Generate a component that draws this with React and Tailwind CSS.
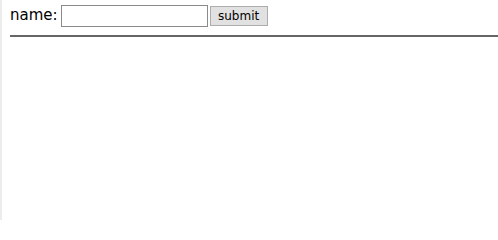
export default function App() {
  return (
    <div className="min-h-[220px] bg-white border-l-2 border-[#ececec] pl-[8px] pt-[5px] font-['DejaVu_Sans',sans-serif]">
      <form className="flex items-center h-[21px]" onSubmit={(e) => e.preventDefault()}>
        <label className="text-[15px] leading-none text-black mr-[3px]">name:</label>
        <input
          type="text"
          className="w-[147px] h-[22px] border border-[#8a8a8a] bg-white px-1 outline-none"
        />
        <button
          type="submit"
          className="ml-[2px] w-[58px] h-[20px] border border-[#adadad] bg-[#e1e1e1] text-[12px] leading-none text-black"
        >
          submit
        </button>
      </form>
      <hr className="mt-[9px] border-0 border-t-2 border-[#666]" />
    </div>
  );
}
